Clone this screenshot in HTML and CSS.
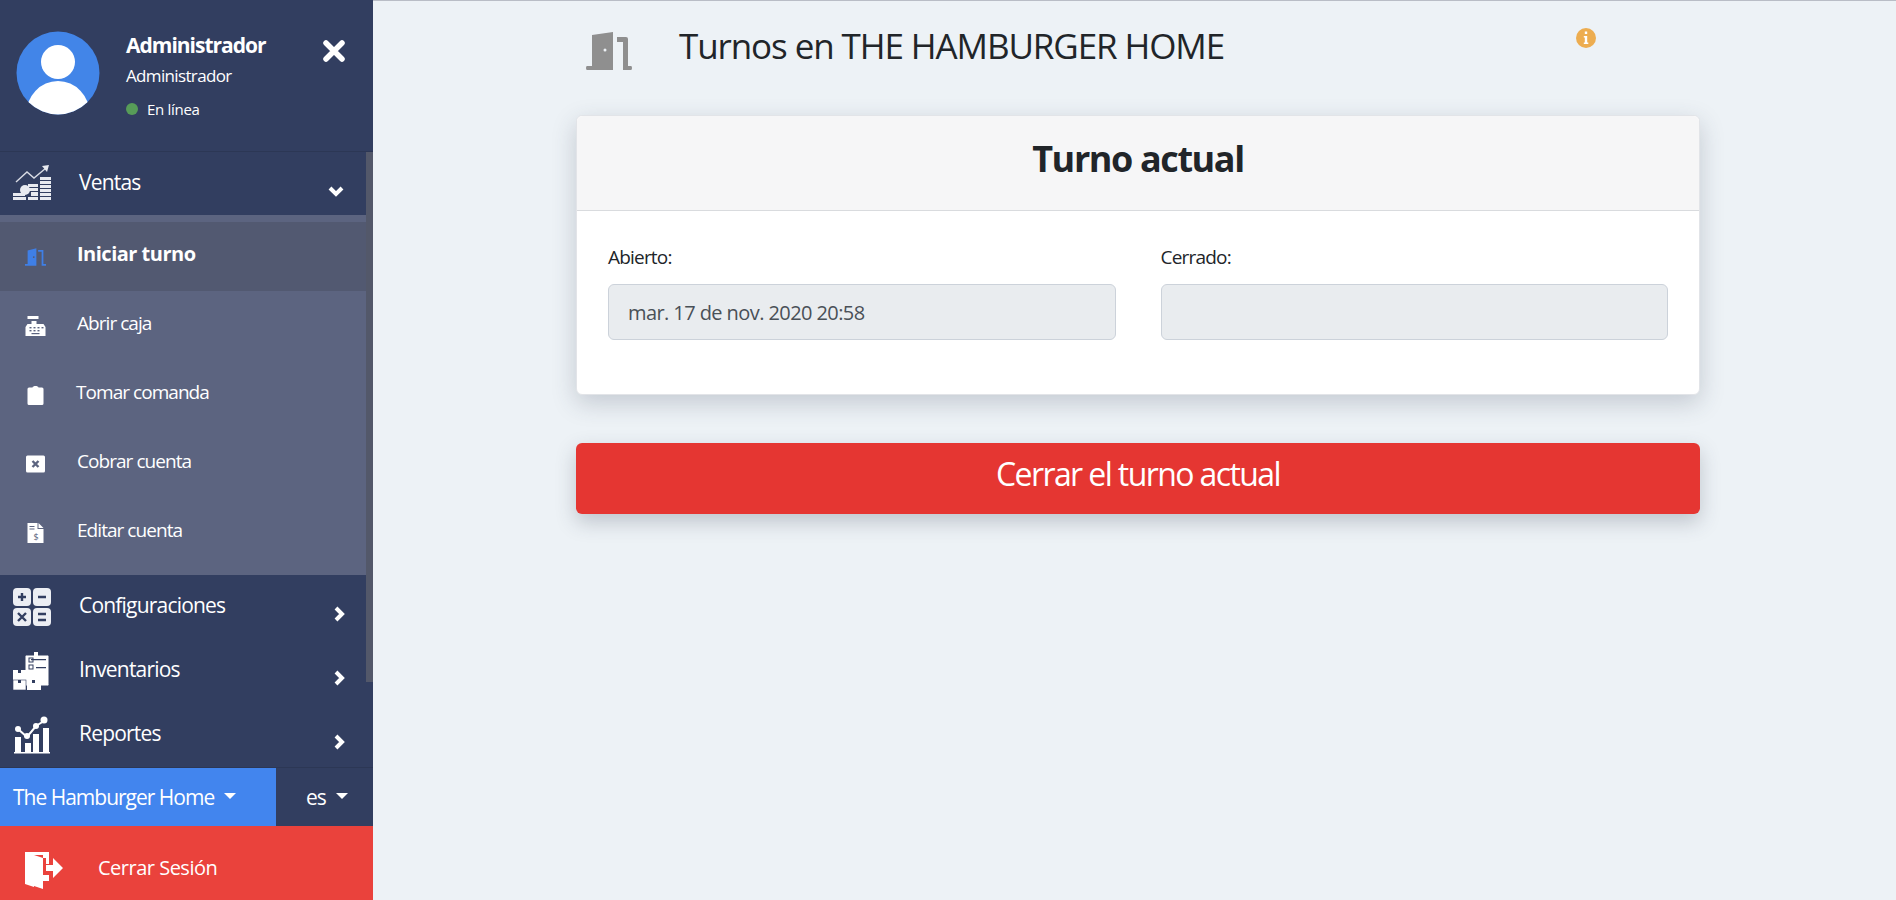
FILE: index.html
```html
<!DOCTYPE html>
<html lang="es">
<head>
    <meta charset="UTF-8">
    <title>Turnos</title>
    <link rel="stylesheet" href="styles.css">
</head>
<body>
    <aside class="sidebar">
        <div class="user-panel">
            <svg class="avatar" viewBox="0 0 84 84">
                <defs><clipPath id="avatar-clip"><circle cx="42" cy="42" r="41.5"/></clipPath></defs>
                <circle cx="42" cy="42" r="41.5" fill="#4285e8"/>
                <g clip-path="url(#avatar-clip)" fill="#fff">
                    <circle cx="42" cy="31" r="17"/>
                    <ellipse cx="42" cy="84" rx="32" ry="34"/>
                </g>
            </svg>
            <div class="user-info">
                <div class="user-name">Administrador</div>
                <div class="user-role">Administrador</div>
                <div class="user-status"><span class="status-dot"></span>En línea</div>
            </div>
            <svg class="close-icon" viewBox="0 0 22 22"><path d="M3 3 L19 19 M19 3 L3 19" stroke="#fff" stroke-width="5.5" stroke-linecap="round"/></svg>
        </div>

        <nav class="menu">
            <div class="scroll-thumb"></div>
            <a class="menu-row menu-row-first">
                <svg class="menu-icon" viewBox="0 0 38 38" fill="#e8eaf0">
                    <path d="M3 17 L14 7 L21 13 L33 3" fill="none" stroke="#d8dbe4" stroke-width="1.4"/>
                    <path d="M29 1 L36 0 L34 7 Z"/>
                    <path d="M27 12h11v3h-11zM27 16h11v3h-11zM27 20h11v3h-11zM27 24h11v3h-11zM27 28h11v3h-11zM27 32h11v3h-11z"/>
                    <path d="M15 19h10v3h-10zM15 23h10v3h-10zM15 32h10v3h-10zM18 27h7v4h-7z"/>
                    <path d="M0 28h12v3h-12zM0 32h13v3h-13z"/>
                    <circle cx="12" cy="25" r="5"/>
                </svg>
                <span class="menu-label">Ventas</span>
                <svg class="chevron chevron-down" viewBox="0 0 18 12"><path d="M3 3 L9 9 L15 3" fill="none" stroke="#fff" stroke-width="4"/></svg>
            </a>
            <div class="submenu">
                <a class="sub-row active">
                    <svg class="sub-icon" viewBox="0 0 24 20" fill="#3f7fe6">
                        <path d="M3 18V2.5L13 0V20H0V18Z"/>
                        <path d="M15 2h6v16h3v2h-5V4h-4z"/>
                        <circle cx="10" cy="10" r="1" fill="#525971"/>
                    </svg>
                    <span class="sub-label">Iniciar turno</span>
                </a>
                <a class="sub-row">
                    <svg class="sub-icon" viewBox="0 0 20 20" fill="#fff">
                        <path d="M2 0h11v3H8v2h3v3h7l2 3v9H0v-9l2-3h4V5h2V3H2z"/>
                        <g fill="#5c6480"><rect x="4" y="11" width="2" height="1.4"/><rect x="8" y="11" width="2" height="1.4"/><rect x="12" y="11" width="2" height="1.4"/><rect x="16" y="11" width="2" height="1.4"/><rect x="4" y="14" width="2" height="1.4"/><rect x="8" y="14" width="2" height="1.4"/><rect x="12" y="14" width="2" height="1.4"/><rect x="6" y="17" width="8" height="1.2"/></g>
                    </svg>
                    <span class="sub-label">Abrir caja</span>
                </a>
                <a class="sub-row">
                    <svg class="sub-icon" viewBox="0 0 20 20" fill="#fff"><path d="M3.5 2.5H7C7.3 .5 12.7 .5 13 2.5h3.500Q18 2.500 18 4v14.500Q18 20 16.500 20h-13Q2 20 2 18.500V4Q2 2.500 3.500 2.500Z"/></svg>
                    <span class="sub-label label-tight">Tomar comanda</span>
                </a>
                <a class="sub-row">
                    <svg class="sub-icon" viewBox="0 0 20 20"><rect x="0.500" y="1.500" width="19" height="17" rx="1.500" fill="#fff"/><path d="M7 7 L13 13 M13 7 L7 13" stroke="#5c6480" stroke-width="2.400"/></svg>
                    <span class="sub-label">Cobrar cuenta</span>
                </a>
                <a class="sub-row">
                    <svg class="sub-icon" viewBox="0 0 20 20" fill="#fff">
                        <path d="M2 0h10v6h6v14H2z"/><path d="M13 0l5 5h-5z"/>
                        <g fill="#5c6480"><rect x="4" y="3" width="5" height="1"/><rect x="4" y="5.500" width="5" height="1"/></g>
                        <text x="10" y="17" text-anchor="middle" class="file-dollar">$</text>
                    </svg>
                    <span class="sub-label">Editar cuenta</span>
                </a>
            </div>
            <a class="menu-row">
                <svg class="menu-icon" viewBox="0 0 38 38">
                    <rect x="0" y="0" width="18" height="18" rx="4" fill="#eceef3"/><rect x="20" y="0" width="18" height="18" rx="4" fill="#eceef3"/>
                    <rect x="0" y="20" width="18" height="18" rx="4" fill="#eceef3"/><rect x="20" y="20" width="18" height="18" rx="4" fill="#eceef3"/>
                    <path d="M5 9h8M9 5v8M25 9h8M5 25l8 8M13 25l-8 8M25 26h8M25 32h8" stroke="#323e60" stroke-width="2.400"/>
                </svg>
                <span class="menu-label">Configuraciones</span>
                <svg class="chevron" viewBox="0 0 12 18"><path d="M3 3 L9 9 L3 15" fill="none" stroke="#fff" stroke-width="4"/></svg>
            </a>
            <a class="menu-row">
                <svg class="menu-icon" viewBox="0 0 38 38">
                    <rect x="12" y="3" width="24" height="31" rx="1.500" fill="#fff" stroke="#323e60" stroke-width="1"/>
                    <rect x="21" y="0" width="4" height="4" fill="#fff"/>
                    <path d="M18 7h15v1.300H18zM23 15h10v1.300H23z" fill="#323e60"/>
                    <rect x="16" y="6" width="4" height="4" fill="none" stroke="#323e60"/>
                    <rect x="16" y="13" width="4" height="4" fill="none" stroke="#323e60"/>
                    <rect x="0" y="18" width="13" height="10" fill="#fff"/>
                    <rect x="0" y="28" width="13" height="10" fill="#fff" stroke="#323e60" stroke-width=".6"/>
                    <rect x="14" y="28" width="14" height="10" fill="#fff"/>
                    <path d="M5 18h3v3H5zM5 28h3v3H5zM19 28h3v3h-3z" fill="#323e60"/>
                </svg>
                <span class="menu-label">Inventarios</span>
                <svg class="chevron" viewBox="0 0 12 18"><path d="M3 3 L9 9 L3 15" fill="none" stroke="#fff" stroke-width="4"/></svg>
            </a>
            <a class="menu-row">
                <svg class="menu-icon" viewBox="0 0 38 38" fill="#fff">
                    <path d="M1 36h36v1.500H1zM2 21h6v15H2zM12 27h6v9h-6zM20 18h6v18h-6zM30 12h6v24h-6z"/>
                    <path d="M5 13 L14 21 L23 10 L31 5" fill="none" stroke="#fff" stroke-width="2"/>
                    <circle cx="5" cy="13" r="3"/><circle cx="14" cy="20" r="3"/><circle cx="23" cy="10" r="3"/><circle cx="31" cy="4" r="3.500"/>
                </svg>
                <span class="menu-label">Reportes</span>
                <svg class="chevron" viewBox="0 0 12 18"><path d="M3 3 L9 9 L3 15" fill="none" stroke="#fff" stroke-width="4"/></svg>
            </a>
        </nav>

        <div class="store-bar">
            <div class="store-select">The Hamburger Home<span class="caret"></span></div>
            <div class="lang-select">es<span class="caret"></span></div>
        </div>
        <a class="logout">
            <svg class="logout-icon" viewBox="0 0 38 38" fill="#fff">
                <path d="M0 1h24v9h-3V4H9v32l-9-3z" />
                <path d="M0 1 L18 7V38L0 32Z"/>
                <path d="M18 4h6v9h-3V7h-3zM18 24h6v6h-6z"/>
                <path d="M21 14h7V7l10 10-10 10v-7h-7z"/>
            </svg>
            <span>Cerrar Sesión</span>
        </a>
    </aside>

    <main class="content">
        <header class="page-head">
            <svg class="door-icon" viewBox="0 0 46 38" fill="#8f8f8f">
                <path d="M6 34V3L27 0V38H1Q0 38 0 36T1 34Z"/>
                <path d="M31 5h9q2 0 2 2v27h3q1 0 1 2t-1 2H37V10h-6z"/>
                <circle cx="19" cy="18" r="1.500" fill="#eef2f6"/>
            </svg>
            <h1>Turnos en THE HAMBURGER HOME</h1>
            <svg class="info-icon" viewBox="0 0 20 20">
                <circle cx="10" cy="10" r="10" fill="#edad50"/>
                <path d="M8.800 3.500h2.400v2.400H8.800zM7.800 8h3.400v6.500h1.100V16H7.800v-1.500h1V9.500h-1z" fill="#fff"/>
            </svg>
        </header>

        <section class="card">
            <div class="card-head">Turno actual</div>
            <div class="card-body">
                <div class="field">
                    <label>Abierto:</label>
                    <div class="field-input">mar. 17 de nov. 2020 20:58</div>
                </div>
                <div class="field">
                    <label>Cerrado:</label>
                    <div class="field-input"></div>
                </div>
            </div>
        </section>

        <button class="btn-close">Cerrar el turno actual</button>
    </main>
</body>
</html>
```
FILE: styles.css
```css
* {
    margin: 0;
    padding: 0;
    box-sizing: border-box;
    font-family: 'Open Sans', sans-serif;
}

body {
    display: flex;
    height: 900px;
    overflow: hidden;
    background: #edf2f6;
    color: #212529;
}

/* Sidebar */
.sidebar {
    width: 373px;
    height: 900px;
    display: flex;
    flex-direction: column;
    background: #323e60;
    color: #fff;
    flex-shrink: 0;
}

.user-panel {
    height: 152px;
    display: flex;
    padding: 31px 0 0 16px;
    border-bottom: 1px solid #2c3755;
}

.avatar {
    width: 84px;
    height: 84px;
}

.user-info {
    margin-left: 26px;
    width: 197px;
}

.user-name {
    font-size: 21px;
    font-weight: 700;
    line-height: 26px;
    margin-top: 1px;
    letter-spacing: -1px;
}

.user-role {
    font-size: 17px;
    line-height: 24px;
    margin-top: 6px;
    letter-spacing: -0.65px;
}

.user-status {
    display: flex;
    align-items: center;
    font-size: 15px;
    line-height: 22px;
    margin-top: 10px;
    letter-spacing: -0.3px;
}

.status-dot {
    width: 12px;
    height: 12px;
    border-radius: 50%;
    background: #579c58;
    margin-right: 9px;
}

.close-icon {
    width: 22px;
    height: 22px;
    margin-top: 9px;
}

.menu {
    position: relative;
    height: 615px;
}

.scroll-thumb {
    position: absolute;
    right: 0;
    top: 0;
    width: 7px;
    height: 530px;
    background: #53586a;
}

.menu-row {
    height: 64px;
    display: flex;
    align-items: center;
    padding-left: 13px;
}

.menu-row-first {
    height: 63px;
}

.menu-icon {
    width: 38px;
    height: 38px;
    flex-shrink: 0;
}

.menu-label {
    margin-left: 28px;
    margin-top: -4px;
    font-size: 21px;
    width: 254px;
    letter-spacing: -0.8px;
}

.chevron {
    width: 12px;
    height: 18px;
    margin-top: 14px;
}

.chevron-down {
    width: 18px;
    height: 12px;
    margin-left: -6px;
    margin-top: 14px;
}

.submenu {
    width: 366px;
    background: #5c6480;
    padding: 7px 0 8px;
}

.sub-row {
    height: 69px;
    display: flex;
    align-items: center;
    padding-left: 25px;
    font-size: 19px;
    letter-spacing: -0.95px;
}

.sub-row.active {
    background: #525971;
    font-weight: 700;
    font-size: 20px;
    letter-spacing: -0.5px;
}

.sub-icon {
    width: 21px;
    height: 20px;
    margin-right: 31px;
    flex-shrink: 0;
}

.sub-label {
    margin-top: -5px;
}

.active .sub-label {
    margin-top: -7px;
}

.label-tight {
    margin-left: -1px;
}

.file-dollar {
    font-size: 9px;
    fill: #5c6480;
}

.store-bar {
    height: 59px;
    display: flex;
    border-top: 1px solid #2c3755;
    font-size: 21px;
    letter-spacing: -1px;
}

.store-select {
    width: 276px;
    background: #4285ee;
    display: flex;
    align-items: center;
    padding-left: 13px;
}

.lang-select {
    display: flex;
    align-items: center;
    padding-left: 30px;
}

.caret {
    border-left: 6.500px solid transparent;
    border-right: 6.500px solid transparent;
    border-top: 6.500px solid #fff;
    margin-left: 10px;
    margin-top: -3px;
}

.logout {
    height: 74px;
    background: #ea423c;
    display: flex;
    align-items: center;
    padding: 9px 0 0 25px;
    font-size: 20px;
    letter-spacing: -0.5px;
}

.logout-icon {
    width: 38px;
    height: 38px;
    margin: 4px 35px 0 0;
}

/* Main */
.content {
    flex: 1;
    padding: 0 196px 0 203px;
    border-top: 1px solid #b9bdc6;
}

.page-head {
    height: 114px;
    display: flex;
    padding: 31px 0 0 10px;
}

.door-icon {
    width: 46px;
    height: 38px;
}

.page-head h1 {
    font-size: 35px;
    font-weight: 400;
    line-height: 30px;
    margin: -1px 0 0 47px;
    width: 897px;
    letter-spacing: -1.1px;
}

.info-icon {
    width: 20px;
    height: 20px;
    margin-top: -4px;
}

.card {
    height: 280px;
    background: #fff;
    border: 1px solid #e2e4e8;
    border-radius: 6px;
    box-shadow: 0 8px 24px rgba(50, 60, 80, 0.22);
}

.card-head {
    height: 95px;
    background: #f6f6f7;
    border-bottom: 1px solid #d9dbde;
    border-radius: 6px 6px 0 0;
    display: flex;
    align-items: center;
    justify-content: center;
    padding-bottom: 10px;
    font-size: 36px;
    font-weight: 700;
    letter-spacing: -1.4px;
}

.card-body {
    display: flex;
    gap: 45px;
    padding: 33px 31px 0;
}

.field {
    flex: 1;
}

.field label {
    display: block;
    font-size: 19px;
    line-height: 26px;
    letter-spacing: -0.8px;
}

.field-input {
    height: 56px;
    margin-top: 14px;
    padding-left: 19px;
    display: flex;
    align-items: center;
    background: #e9ecef;
    border: 1px solid #ccd2da;
    border-radius: 6px;
    font-size: 20px;
    letter-spacing: -0.58px;
    color: #495057;
}

.btn-close {
    display: block;
    width: 100%;
    height: 71px;
    margin-top: 48px;
    padding-bottom: 10px;
    background: #e53632;
    color: #fff;
    border: none;
    border-radius: 6px;
    font-size: 32px;
    letter-spacing: -1.6px;
    box-shadow: 0 8px 20px rgba(50, 60, 80, 0.25);
}
```
